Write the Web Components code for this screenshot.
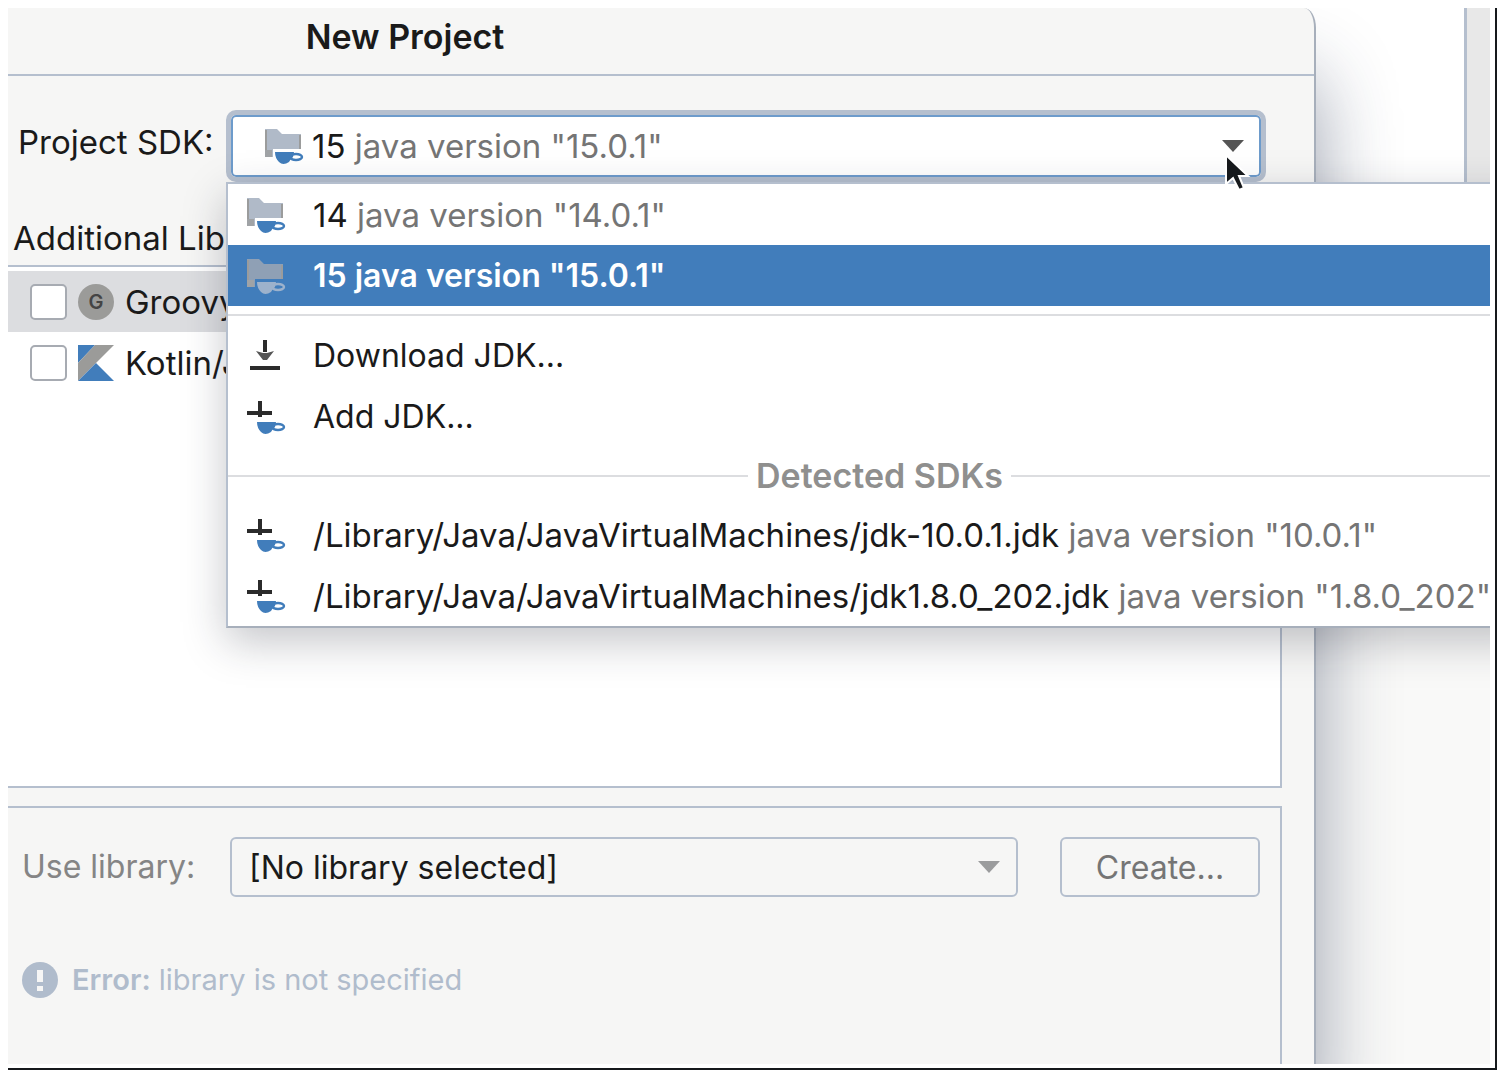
<!DOCTYPE html>
<html lang="en">
<head>
<meta charset="utf-8">
<title>New Project</title>
<style>
html, body {
    height: 100%;
    margin: 0;
}
body {
    background: #fff;
    color: #1a1a1a;
    font: 33px/40px Inter, "Liberation Sans", sans-serif;
    --line: #b5bfce;
    --panel: #f6f6f5;
    --accent: #417dbb;
    --muted: #757575;
}
</style>
</head>
<body>
<app-stage>
    <project-dialog>
        <span slot="title">New Project</span>
        <sdk-field></sdk-field>
        <framework-list>
            <framework-item name="Groovy" icon="groovy" selected></framework-item>
            <framework-item name="Kotlin/JVM" icon="kotlin"></framework-item>
        </framework-list>
        <library-panel></library-panel>
    </project-dialog>
</app-stage>

<script>
const cup = (y) => `
    <path d="M10 ${y}H29L28 ${y + 5}Q25 ${y + 8} 24 ${y + 10}Q18 ${y + 14} 14 ${y + 10}Q10 ${y + 6} 10 ${y}Z" fill="var(--cup, #417dbb)"></path>
    <ellipse cx="31" cy="${y + 5}" rx="6" ry="3" fill="none" stroke="var(--cup, #417dbb)" stroke-width="2.4"></ellipse>`;

const icons = {
    sdk: `<path d="M0 1H12L17 6H36V21H8V29H0Z" fill="var(--folder, #b0bac8)"></path>
        <path d="M1 29V2M35 7V21" fill="none" stroke="#9b9c9c" stroke-width="2"></path>
        <path d="M0 22H7V29H0Z" fill="#a0a3a6"></path>${cup(24)}`,
    add: `<path d="M11 2H15V18H11ZM0 12H25V16H0Z" fill="#2b2b2b"></path>${cup(23)}`,
    download: `<path d="M16 2H20V14H16ZM3 28H33V32H3Z" fill="#2b2b2b"></path>
        <path d="M9 13L16 15H20L27 13L20 22H16Z" fill="#555"></path>`,
    groovy: `<circle cx="18" cy="18" r="18" fill="#9b9b99"></circle>
        <text x="18" y="25" text-anchor="middle" font-size="20" font-weight="600" fill="#444">G</text>`,
    kotlin: `<path d="M0 0H17L0 18Z" fill="#417dbb"></path>
        <path d="M17 0H36L0 36V18Z" fill="#9b9b99"></path>
        <path d="M18 18L36 36H0Z" fill="#417dbb"></path>`,
    error: `<circle cx="18" cy="18" r="18" fill="#b0bccc"></circle>
        <path d="M15 8H21V20H15ZM15 24H21V29H15Z" fill="#f6f6f5"></path>`
};

class UiIcon extends HTMLElement {
    constructor() {
        super();
        this.attachShadow({ mode: 'open' });
    }

    connectedCallback() {
        const name = this.getAttribute("name");
        const width = name === "sdk" || name === "add" || name === "download" ? 38 : 36;
        this.shadowRoot.innerHTML = `
<style>
:host {
    display: block;
    flex: none;
}
svg {
    display: block;
}
</style>
<svg viewBox="0 0 ${width} 36" width="${width}" height="36" overflow="visible" aria-hidden="true">${icons[name]}</svg>
`;
    }
}

class AppStage extends HTMLElement {
    constructor() {
        super();
        this.attachShadow({ mode: 'open' });
        this.shadowRoot.innerHTML = `
<style>
:host {
    box-sizing: border-box;
    min-height: 100vh;
    padding: 8px 3px 4px 8px;
    display: flex;
}
.frame {
    flex: 1;
    min-width: 0;
    display: flex;
    padding: 0 5px 4px 0;
    border-right: 2px solid #16191c;
    border-bottom: 2px solid #16191c;
}
.stage {
    flex: 1;
    min-width: 0;
    display: flex;
    overflow: hidden;
}
slot {
    display: flex;
    flex: 1;
    min-width: 0;
}
.behind {
    width: 174px;
    display: flex;
    flex-direction: column;
}
.top {
    height: 175px;
    display: flex;
    justify-content: flex-end;
}
.side {
    width: 23px;
    background: #e8e8e8;
    border-left: 3px solid var(--line);
}
.bottom {
    flex: 1;
    background: #f9f9f8;
}
</style>
<div class="frame">
    <div class="stage">
        <slot></slot>
        <div class="behind">
            <div class="top"><div class="side"></div></div>
            <div class="bottom"></div>
        </div>
    </div>
</div>
`;
    }
}

class ProjectDialog extends HTMLElement {
    constructor() {
        super();
        this.attachShadow({ mode: 'open' });
        this.shadowRoot.innerHTML = `
<style>
:host {
    flex: 1;
    min-width: 0;
    position: relative;
    z-index: 1;
    display: flex;
    flex-direction: column;
    background: var(--panel);
    border-right: 2px solid #a7afbb;
    border-top-right-radius: 12px 20px;
    box-shadow: 0 70px 80px rgba(30, 45, 75, .45);
}
header {
    padding: 9px 512px 17px 0;
    text-align: center;
    border-bottom: 2px solid var(--line);
}
h1 {
    margin: 0;
    font-size: 34px;
    line-height: 40px;
    font-weight: 600;
}
.body {
    flex: 1;
    display: flex;
    flex-direction: column;
    padding-top: 34px;
}
</style>
<header><h1><slot name="title"></slot></h1></header>
<div class="body"><slot></slot></div>
`;
    }
}

class SdkField extends HTMLElement {
    constructor() {
        super();
        this.attachShadow({ mode: 'open' });
        this.shadowRoot.innerHTML = `
<style>
:host {
    display: flex;
    align-items: center;
    padding-right: 48px;
    position: relative;
    z-index: 2;
}
label {
    width: 208px;
    padding: 0 0 8px 10px;
    white-space: nowrap;
}
.combo {
    flex: 1;
    position: relative;
}
button {
    display: flex;
    align-items: center;
    gap: 9px;
    width: 100%;
    height: 72px;
    padding: 0 17px 0 34px;
    border: 5px solid var(--line);
    border-radius: 10px;
    background: #fff;
    box-shadow: inset 0 0 0 2px #6d9bcb;
    color: inherit;
    font: inherit;
    text-align: left;
    outline: none;
}
.value {
    flex: 1;
}
i {
    color: var(--muted);
    font-style: normal;
}
.cursor {
    position: absolute;
    top: 42px;
    right: 14px;
}
.popup {
    position: absolute;
    top: 100%;
    left: 0;
}
</style>
<label for="sdk">Project SDK:</label>
<div class="combo">
    <button id="sdk" type="button" role="combobox" aria-haspopup="listbox" aria-expanded="true">
        <ui-icon name="sdk"></ui-icon>
        <span class="value">15 <i>java version "15.0.1"</i></span>
        <svg width="22" height="12" viewBox="0 0 22 12" aria-hidden="true"><path d="M0 0H22L11 12Z" fill="#555"></path></svg>
    </button>
    <sdk-popup class="popup"></sdk-popup>
    <svg class="cursor" width="28" height="42" viewBox="0 0 28 42" aria-hidden="true">
        <path d="M2 3V32L9 26L15 38L20 36L15 24H24Z" fill="#16191c" stroke="#fff" stroke-width="2"></path>
    </svg>
</div>
`;
    }
}

class SdkPopup extends HTMLElement {
    constructor() {
        super();
        this.attachShadow({ mode: 'open' });
        this.shadowRoot.innerHTML = `
<style>
:host {
    display: block;
    width: max-content;
    border: 2px solid var(--line);
    border-bottom-color: #a7afbb;
    background: #fff;
    box-shadow: 0 14px 40px rgba(30, 35, 50, .26);
}
hr {
    margin: 8px 0 9px;
    border: 0;
    border-top: 2px solid #dcdde0;
}
.group {
    display: flex;
    align-items: center;
    gap: 8px;
    height: 57px;
    color: #8f8f8e;
    font-size: 34px;
    font-weight: 600;
}
.group::before, .group::after {
    content: "";
    flex: 1;
    border-top: 2px solid #dcdde0;
}
</style>
<div role="listbox" aria-label="Project SDK">
    <sdk-option icon="sdk" note='java version "14.0.1"'>14</sdk-option>
    <sdk-option icon="sdk" note='java version "15.0.1"' selected>15</sdk-option>
    <hr>
    <sdk-option icon="download">Download JDK...</sdk-option>
    <sdk-option icon="add">Add JDK...</sdk-option>
    <div class="group">Detected SDKs</div>
    <sdk-option icon="add" note='java version "10.0.1"'>/Library/Java/JavaVirtualMachines/jdk-10.0.1.jdk</sdk-option>
    <sdk-option icon="add" note='java version "1.8.0_202"'>/Library/Java/JavaVirtualMachines/jdk1.8.0_202.jdk</sdk-option>
</div>
`;
    }
}

class SdkOption extends HTMLElement {
    constructor() {
        super();
        this.attachShadow({ mode: 'open' });
    }

    connectedCallback() {
        const note = this.getAttribute("note");
        this.setAttribute("role", "option");
        this.setAttribute("aria-selected", this.hasAttribute("selected"));
        this.shadowRoot.innerHTML = `
<style>
:host {
    display: flex;
    align-items: center;
    gap: 28px;
    height: 61px;
    padding: 0 40px 0 19px;
    white-space: nowrap;
}
:host(:not([note])) {
    font-size: 32px;
}
:host([selected]) {
    --cup: #9db2cc;
    --folder: #8fa0b5;
    --muted: #fff;
    background: var(--accent);
    color: #fff;
    font-size: 32px;
    font-weight: 600;
}
i {
    color: var(--muted);
    font-style: normal;
}
</style>
<ui-icon name="${this.getAttribute("icon")}"></ui-icon>
<span><slot></slot>${note ? ` <i>${note}</i>` : ""}</span>
`;
    }
}

class FrameworkList extends HTMLElement {
    constructor() {
        super();
        this.attachShadow({ mode: 'open' });
        this.shadowRoot.innerHTML = `
<style>
:host {
    flex: 1;
    display: flex;
    flex-direction: column;
    margin: 36px 32px 18px 0;
}
h2 {
    margin: 0 0 7px;
    padding-left: 5px;
    font-size: 33px;
    line-height: 40px;
    font-weight: 400;
}
.list {
    flex: 1;
    padding-top: 4px;
    border: 2px solid var(--line);
    border-left: 0;
    background: #fff;
}
</style>
<h2>Additional Lib</h2>
<div class="list"><slot></slot></div>
`;
    }
}

class FrameworkItem extends HTMLElement {
    constructor() {
        super();
        this.attachShadow({ mode: 'open' });
    }

    connectedCallback() {
        this.shadowRoot.innerHTML = `
<style>
:host {
    display: block;
}
:host([selected]) {
    background: #dcdde0;
}
label {
    display: flex;
    align-items: center;
    gap: 11px;
    height: 61px;
    padding-left: 22px;
}
input {
    appearance: none;
    box-sizing: border-box;
    width: 37px;
    height: 36px;
    margin: 0;
    border: 2px solid #a7abb2;
    border-radius: 5px;
    background: #fff;
}
</style>
<label>
    <input type="checkbox">
    <ui-icon name="${this.getAttribute("icon")}"></ui-icon>
    <span>${this.getAttribute("name")}</span>
</label>
`;
    }
}

class LibraryPanel extends HTMLElement {
    constructor() {
        super();
        this.attachShadow({ mode: 'open' });
        this.shadowRoot.innerHTML = `
<style>
:host {
    display: block;
    margin-right: 32px;
    padding: 29px 20px 64px 14px;
    border: 2px solid var(--line);
    border-width: 2px 2px 0 0;
}
.row {
    display: flex;
    align-items: center;
}
label {
    width: 208px;
    color: #858585;
    font-size: 32px;
}
.select {
    flex: 1;
    display: grid;
    align-items: center;
    margin-right: 42px;
}
select, button {
    box-sizing: border-box;
    height: 60px;
    padding: 2px 17px 0;
    border: 2px solid var(--line);
    border-radius: 6px;
    background: var(--panel);
    font: inherit;
    font-size: 32px;
}
select {
    grid-area: 1 / 1;
    appearance: none;
    width: 100%;
    color: inherit;
}
.select svg {
    grid-area: 1 / 1;
    justify-self: end;
    margin-right: 18px;
    pointer-events: none;
}
button {
    width: 200px;
    color: #757575;
}
p {
    display: flex;
    align-items: center;
    gap: 14px;
    margin: 63px 0 0;
    color: #b0bccc;
    font-size: 29px;
}
b {
    font-weight: 600;
}
</style>
<div class="row">
    <label for="library">Use library:</label>
    <div class="select">
        <select id="library"><option>[No library selected]</option></select>
        <svg width="22" height="12" viewBox="0 0 22 12" aria-hidden="true"><path d="M0 0H22L11 12Z" fill="#9b9c9d"></path></svg>
    </div>
    <button type="button">Create...</button>
</div>
<p><ui-icon name="error"></ui-icon><span><b>Error:</b> library is not specified</span></p>
`;
    }
}

customElements.define('ui-icon', UiIcon);
customElements.define('app-stage', AppStage);
customElements.define('project-dialog', ProjectDialog);
customElements.define('sdk-option', SdkOption);
customElements.define('sdk-popup', SdkPopup);
customElements.define('sdk-field', SdkField);
customElements.define('framework-item', FrameworkItem);
customElements.define('framework-list', FrameworkList);
customElements.define('library-panel', LibraryPanel);
</script>
</body>
</html>
